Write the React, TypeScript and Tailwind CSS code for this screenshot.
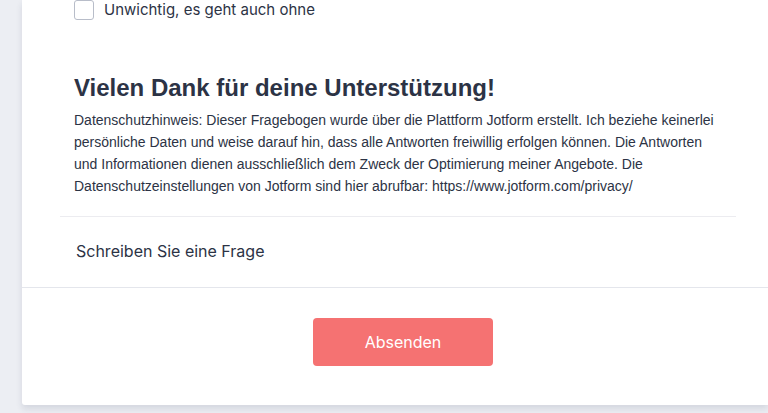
import * as React from "react";

export default function App() {
  return (
    <div className="h-[413px] w-[768px] overflow-hidden bg-[#eceef3] pl-[22px]">
      <div className="w-[746px] rounded-bl-[3px] bg-white shadow-[0_4px_6px_rgba(42,51,84,0.12)]">
        <div className="pl-[38px] pr-[32px]">
          {/* Checkbox option */}
          <div className="flex h-[20px] items-center px-[14px]">
            <span className="h-[20px] w-[20px] rounded-[3px] border border-[#b8bdc9] bg-white" />
            <span
              className="ml-[10px] text-[15px] text-[#2c3345]"
              style={{ fontFamily: "Inter, sans-serif" }}
            >
              Unwichtig, es geht auch ohne
            </span>
          </div>

          {/* Text block */}
          <div
            className="pl-[14px] pr-[12px] pt-[53px] pb-[19px] text-[#2c3345]"
            style={{ fontFamily: '"Liberation Sans", Arial, sans-serif' }}
          >
            <h2 className="text-[24px] font-bold leading-[30px]">
              Vielen Dank für deine Unterstützung!
            </h2>
            <p className="mt-[6px] text-[14px] leading-[22px]">
              Datenschutzhinweis: Dieser Fragebogen wurde über die Plattform Jotform erstellt. Ich beziehe keinerlei
              persönliche Daten und weise darauf hin, dass alle Antworten freiwillig erfolgen können. Die Antworten
              und Informationen dienen ausschließlich dem Zweck der Optimierung meiner Angebote. Die
              Datenschutzeinstellungen von Jotform sind hier abrufbar: https://www.jotform.com/privacy/
            </p>
          </div>

          <div className="border-t border-[#ececf0]" />

          <div
            className="px-[16px] pt-[22px] pb-[24px] text-[16px] leading-[24px] text-[#2c3345]"
            style={{ fontFamily: "Inter, sans-serif" }}
          >
            Schreiben Sie eine Frage
          </div>
        </div>

        <div className="border-t border-[#e4e6ec]" />

        <div className="pt-[30px] pb-[39px] pl-[291px]">
          <button
            className="h-[48px] w-[180px] rounded-[4px] bg-[#f57272] text-[16px] text-white"
            style={{ fontFamily: "Inter, sans-serif" }}
          >
            Absenden
          </button>
        </div>
      </div>
    </div>
  );
}
